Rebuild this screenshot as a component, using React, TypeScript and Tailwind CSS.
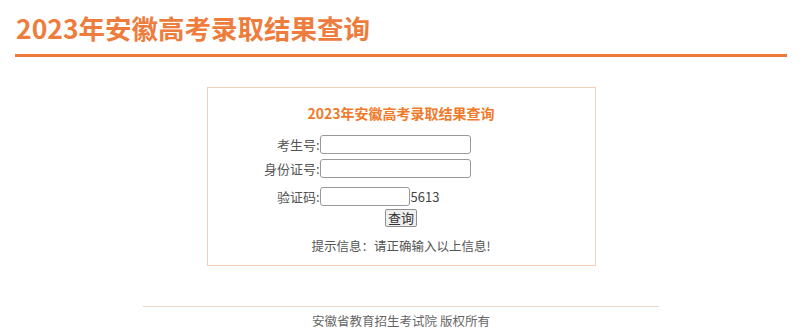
export default function App() {
  return (
    <div className="w-[800px] h-[331px] bg-white overflow-hidden font-['Noto_Sans_CJK_SC',_'Noto_Sans',_sans-serif]">
      <div className="pl-[16px] pt-[8px] h-[54px]">
        <h1 className="text-[26.5px] leading-[40px] font-bold text-[#ee7d3d]">2023年安徽高考录取结果查询</h1>
      </div>
      <div className="ml-[15px] w-[772px] h-[3px] bg-[#ec7a3c]" />

      <div className="mt-[30px] mx-auto w-[389px] h-[179px] border border-[#f3cfb8] translate-x-[1px] flex flex-col items-center">
        <h2 className="mt-[15px] text-[14px] leading-[20px] font-bold text-[#f07a2a]">2023年安徽高考录取结果查询</h2>

        <div className="mt-[12px] self-start ml-[52px] flex flex-col text-[13px] text-[#555] leading-[18px]">
          <div className="flex items-center">
            <span className="w-[60px] text-right">考生号:</span>
            <input className="w-[151px] h-[19px] border border-[#999] rounded-[3px] bg-white" />
          </div>
          <div className="mt-[5px] flex items-center">
            <span className="w-[60px] text-right">身份证号:</span>
            <input className="w-[151px] h-[19px] border border-[#999] rounded-[3px] bg-white" />
          </div>
          <div className="mt-[9px] flex items-center">
            <span className="w-[60px] text-right">验证码:</span>
            <input className="w-[90px] h-[19px] border border-[#999] rounded-[3px] bg-white" />
            <span className="ml-[1px] text-[#444]">5613</span>
          </div>
        </div>
        <button className="mt-[3px] h-[18px] px-[2px] text-[13px] leading-[14px] text-[#333] border border-[#8f8f8f] rounded-[2px] bg-[#efefef]">查询</button>

        <p className="mt-[10px] text-[12.5px] leading-[18px] text-[#555]">提示信息：请正确输入以上信息!</p>
      </div>

      <div className="mt-[40px] mx-auto w-[516px] h-px bg-[#e8d8cc] translate-x-[1px]" />
      <p className="mt-[6px] text-center text-[12.5px] leading-[16px] text-[#666] translate-x-[1px]">安徽省教育招生考试院 版权所有</p>
    </div>
  )
}
